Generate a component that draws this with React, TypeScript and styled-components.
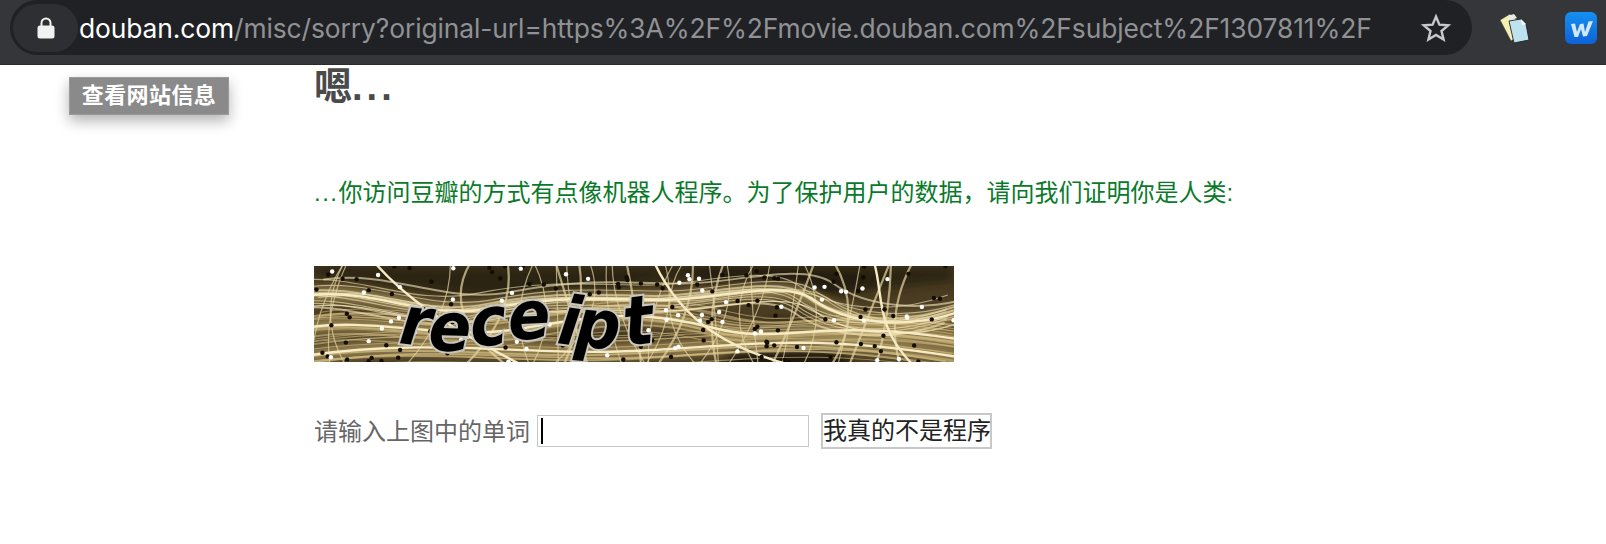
import React, { useMemo } from "react";
import styled, { createGlobalStyle } from "styled-components";

const Global = createGlobalStyle`
  html, body { margin: 0; padding: 0; background: #fff; }
  body { font-family: "Liberation Sans", "Noto Sans CJK SC", sans-serif; width: 1606px; height: 544px; overflow: hidden; }
`;

const Page = styled.div`
  position: relative;
  width: 1606px;
  height: 544px;
  background: #fff;
  overflow: hidden;
`;

const Toolbar = styled.header`
  height: 65px;
  box-sizing: border-box;
  background: #35363a;
  border-bottom: 1px solid #2a2b2e;
  display: flex;
  align-items: flex-start;
`;

const Omnibox = styled.div`
  margin-left: 10px;
  width: 1462px;
  height: 55px;
  box-sizing: border-box;
  background: #202124;
  border-radius: 28px;
  display: flex;
  align-items: center;
  padding-left: 3px;
`;

const LockChip = styled.div`
  width: 65px;
  height: 48px;
  flex: none;
  border-radius: 24px;
  background: #2e2f33;
  display: flex;
  align-items: center;
  justify-content: center;
  margin-right: 1px;
`;

const Url = styled.div`
  width: 1300px;
  flex: none;
  overflow: hidden;
  white-space: nowrap;
  font-family: Inter, "Liberation Sans", sans-serif;
  font-size: 26.4px;
  letter-spacing: -0.1px;
  color: #909194;
`;

const Host = styled.span`
  color: #fff;
`;

const StarSlot = styled.div`
  margin-left: 42px;
  width: 30px;
  height: 30px;
  flex: none;
`;

const Extensions = styled.div`
  display: flex;
  align-items: center;
  margin-left: 27px;
  margin-top: 12px;
  gap: 34px;
`;

const Main = styled.main`
  padding-left: 314px;
`;

const Heading = styled.h1`
  margin: 0;
  height: 46px;
  font-size: 38px;
  line-height: 44px;
  font-weight: 700;
  color: #4a4a4a;
`;

const HeadingDots = styled.span`
  letter-spacing: 4px;
`;

const Notice = styled.p`
  margin: 64px 0 0;
  height: 36px;
  font-size: 24px;
  line-height: 36px;
  color: #0a7a2a;
  white-space: nowrap;
`;

const NoticeDots = styled.span`
  letter-spacing: 1.5px;
`;

const Captcha = styled.svg`
  display: block;
  margin-top: 55px;
  width: 640px;
  height: 96px;
`;

const FormRow = styled.form`
  margin-top: 51px;
  display: flex;
  align-items: center;
  height: 36px;
`;

const Label = styled.label`
  font-size: 24px;
  color: #666;
  line-height: 35px;
  width: 223px;
  flex: none;
`;

const InputBox = styled.div`
  width: 272px;
  height: 32px;
  box-sizing: border-box;
  border: 1px solid #c8c8c8;
  background: #fff;
  display: flex;
  align-items: center;
  padding-left: 3px;
`;

const Caret = styled.span`
  width: 2px;
  height: 26px;
  background: #000;
`;

const Submit = styled.button`
  margin-left: 12px;
  width: 171px;
  height: 36px;
  box-sizing: border-box;
  padding: 0;
  border: 2px solid #c8c8c8;
  background: #fff;
  color: #222;
  font-family: inherit;
  font-size: 24px;
  line-height: 30px;
  white-space: nowrap;
`;

const Tooltip = styled.div`
  position: absolute;
  left: 69px;
  top: 77px;
  width: 160px;
  height: 38px;
  box-sizing: border-box;
  border: 1px solid #9a9a9a;
  background: #8a8a8a;
  color: #fff;
  font-size: 22px;
  letter-spacing: 0.4px;
  font-weight: 700;
  line-height: 36px;
  text-align: center;
  box-shadow: 0 6px 14px rgba(0, 0, 0, 0.3);
`;

function rng(seed: number) {
  let s = seed;
  return () => {
    s = (s * 16807) % 2147483647;
    return s / 2147483647;
  };
}

const letters: [string, number, number, number][] = [
  ["r", 84, 77, 7],
  ["e", 114, 84, 2],
  ["c", 158, 81, -6],
  ["e", 195, 74, -3],
  ["i", 242, 77, 8],
  ["p", 260, 80, 5],
  ["t", 312, 80, -7],
];

const bands = [
  "M-10 30 C60 20 110 56 180 42 S300 34 350 34 S470 12 500 34 S590 66 650 44",
  "M-10 62 C60 50 130 76 210 62 S330 44 400 62 S500 50 650 74",
  "M-10 90 C120 70 220 92 340 84 S520 70 650 92",
  "M340 -4 C370 60 420 84 480 100",
  "M60 -4 C90 30 130 60 210 100",
  "M560 -4 C570 30 560 60 600 100",
];

function CaptchaArt() {
  const { bundled, loose, light, dark } = useMemo(() => {
    const r = rng(48271);
    const bundled: { d: string; shift: string }[] = [];
    for (let i = 0; i < 40; i++) {
      bundled.push({
        d: bands[i % 3],
        shift: `${(r() - 0.5) * 40} ${(r() - 0.5) * 34}`,
      });
    }
    const light: [number, number][] = [];
    const dark: [number, number][] = [];
    for (let i = 0; i < 70; i++) light.push([r() * 640, r() * 96]);
    for (let i = 0; i < 120; i++) dark.push([r() * 640, r() * 96]);
    const loose: string[] = [];
    for (let i = 0; i < 34; i++) {
      const x = r() * 640;
      const bend = (r() - 0.5) * 70;
      const run = (r() - 0.5) * 90;
      loose.push(`M${x} -4 Q${x + bend} 48 ${x + run} 100`);
    }
    return { bundled, loose, light, dark };
  }, []);

  return (
    <Captcha viewBox="0 0 640 96" aria-label="captcha">
      <defs>
        <filter id="soft" x="-5%" y="-5%" width="110%" height="110%">
          <feGaussianBlur stdDeviation="0.7" />
        </filter>
        <filter id="softer" x="-10%" y="-30%" width="120%" height="160%">
          <feGaussianBlur stdDeviation="5" />
        </filter>
        <clipPath id="frame">
          <rect width="640" height="96" />
        </clipPath>
      </defs>
      <g clipPath="url(#frame)">
        <rect width="640" height="96" fill="#4a3c22" />
        <path d="M0 0H640V16C560 20 520 36 470 22S350 10 300 26 150 30 60 18 10 10 0 14Z" fill="#241c0d" opacity="0.75" filter="url(#softer)" />
        <path d="M425 70C470 40 515 58 540 104H410Z" fill="#1b150a" opacity="0.95" filter="url(#softer)" />
        <path d="M380 4C430 2 500 4 560 10L540 24C500 30 450 14 390 22Z" fill="#1f190c" opacity="0.6" filter="url(#softer)" />
        <g fill="none" filter="url(#softer)" stroke="#b29c62" strokeWidth="13" opacity="0.8">
          {bands.slice(0, 3).map((d, i) => (
            <path key={i} d={d} />
          ))}
        </g>
        <g fill="none" filter="url(#soft)">
          {bundled.map((s, i) => (
            <path
              key={i}
              d={s.d}
              transform={`translate(${s.shift})`}
              stroke={i % 3 === 0 ? "#f6e9bd" : "#cdb77e"}
              strokeWidth={i % 4 === 0 ? 2 : 1.1}
              opacity={0.6}
            />
          ))}
          {loose.map((d, i) => (
            <path key={i} d={d} stroke="#e6d6a2" strokeWidth={i % 3 === 0 ? 2.2 : 1.2} opacity={0.7} />
          ))}
          {bands.map((d, i) => (
            <path key={i} d={d} stroke="#f6ebc4" strokeWidth="2.4" />
          ))}
        </g>
        <g filter="url(#soft)">
          {dark.map(([x, y], i) => (
            <circle key={i} cx={x} cy={y} r="2.2" fill="#120d06" />
          ))}
          {light.map(([x, y], i) => (
            <circle key={i} cx={x} cy={y} r="2.2" fill="#fff" />
          ))}
        </g>
        <g fontFamily="'DejaVu Sans', sans-serif" fontWeight="700" fontStyle="italic" fontSize="68" filter="url(#soft)">
          {letters.map(([c, x, y, a], i) => (
            <text
              key={i}
              transform={`translate(${x} ${y}) rotate(${a}) scale(0.92 1)`}
              fill="#050505"
              stroke="#c9c6bd"
              strokeWidth="4"
              paintOrder="stroke"
            >
              {c}
            </text>
          ))}
        </g>
      </g>
    </Captcha>
  );
}

function FileStack() {
  return (
    <svg width="32" height="32" viewBox="0 0 32 32">
      <path d="M1 8 L11 2 L18 8 L24 22 L12 29 Z" fill="#f5efb4" stroke="#333" strokeWidth="0.6" />
      <path d="M10 9 L22 7 L27 12 L30 28 L15 31 Z" fill="#bfe3ee" stroke="#222" strokeWidth="0.9" />
      <path d="M22 7 L23 13 L27 12 Z" fill="#fff" />
      <path d="M9 4 L15 2 L18 6 L11 8 Z" fill="#e9e9e9" />
    </svg>
  );
}

function WordIcon() {
  return (
    <svg width="32" height="32" viewBox="0 0 32 32">
      <defs>
        <linearGradient id="wordBlue" x1="0" y1="0" x2="0" y2="1">
          <stop offset="0" stopColor="#1590f0" />
          <stop offset="1" stopColor="#0d62d8" />
        </linearGradient>
      </defs>
      <rect width="32" height="32" rx="6" fill="url(#wordBlue)" />
      <path
        d="M6 12 L10 11.5 L12 20 L15 12 L18.5 11.5 L20 20 L23.5 9.5 L28 9 L22 24 L18 24.5 L16 17 L13 25 L9.5 25 Z"
        fill="#e8f3fb"
        opacity="0.9"
      />
    </svg>
  );
}

export default function App() {
  return (
    <Page>
      <Global />
      <Toolbar>
        <Omnibox>
          <LockChip>
            <svg width="18" height="22" viewBox="0 0 18 22">
              <path d="M4.5 9V6a4.5 4.5 0 0 1 9 0v3" fill="none" stroke="#f1f1f1" strokeWidth="2" />
              <rect x="0.5" y="8.5" width="17" height="13" rx="2.5" fill="#f1f1f1" />
            </svg>
          </LockChip>
          <Url>
            <Host>douban.com</Host>/misc/sorry?original-url=https%3A%2F%2Fmovie.douban.com%2Fsubject%2F1307811%2F
          </Url>
          <StarSlot>
            <svg width="30" height="30" viewBox="0 0 30 30">
              <path
                d="M15 3.5 L18.4 11.6 L27.2 12.3 L20.5 18 L22.6 26.6 L15 22 L7.4 26.6 L9.5 18 L2.8 12.3 L11.6 11.6 Z"
                fill="none"
                stroke="#c8c9cb"
                strokeWidth="2.4"
              />
            </svg>
          </StarSlot>
        </Omnibox>
        <Extensions>
          <FileStack />
          <WordIcon />
        </Extensions>
      </Toolbar>
      <Main>
        <Heading>
          嗯<HeadingDots>...</HeadingDots>
        </Heading>
        <Notice>
          <NoticeDots>...</NoticeDots>你访问豆瓣的方式有点像机器人程序。为了保护用户的数据，请向我们证明你是人类:
        </Notice>
        <CaptchaArt />
        <FormRow onSubmit={(e) => e.preventDefault()}>
          <Label>请输入上图中的单词</Label>
          <InputBox>
            <Caret />
          </InputBox>
          <Submit type="button">我真的不是程序</Submit>
        </FormRow>
      </Main>
      <Tooltip>查看网站信息</Tooltip>
    </Page>
  );
}
